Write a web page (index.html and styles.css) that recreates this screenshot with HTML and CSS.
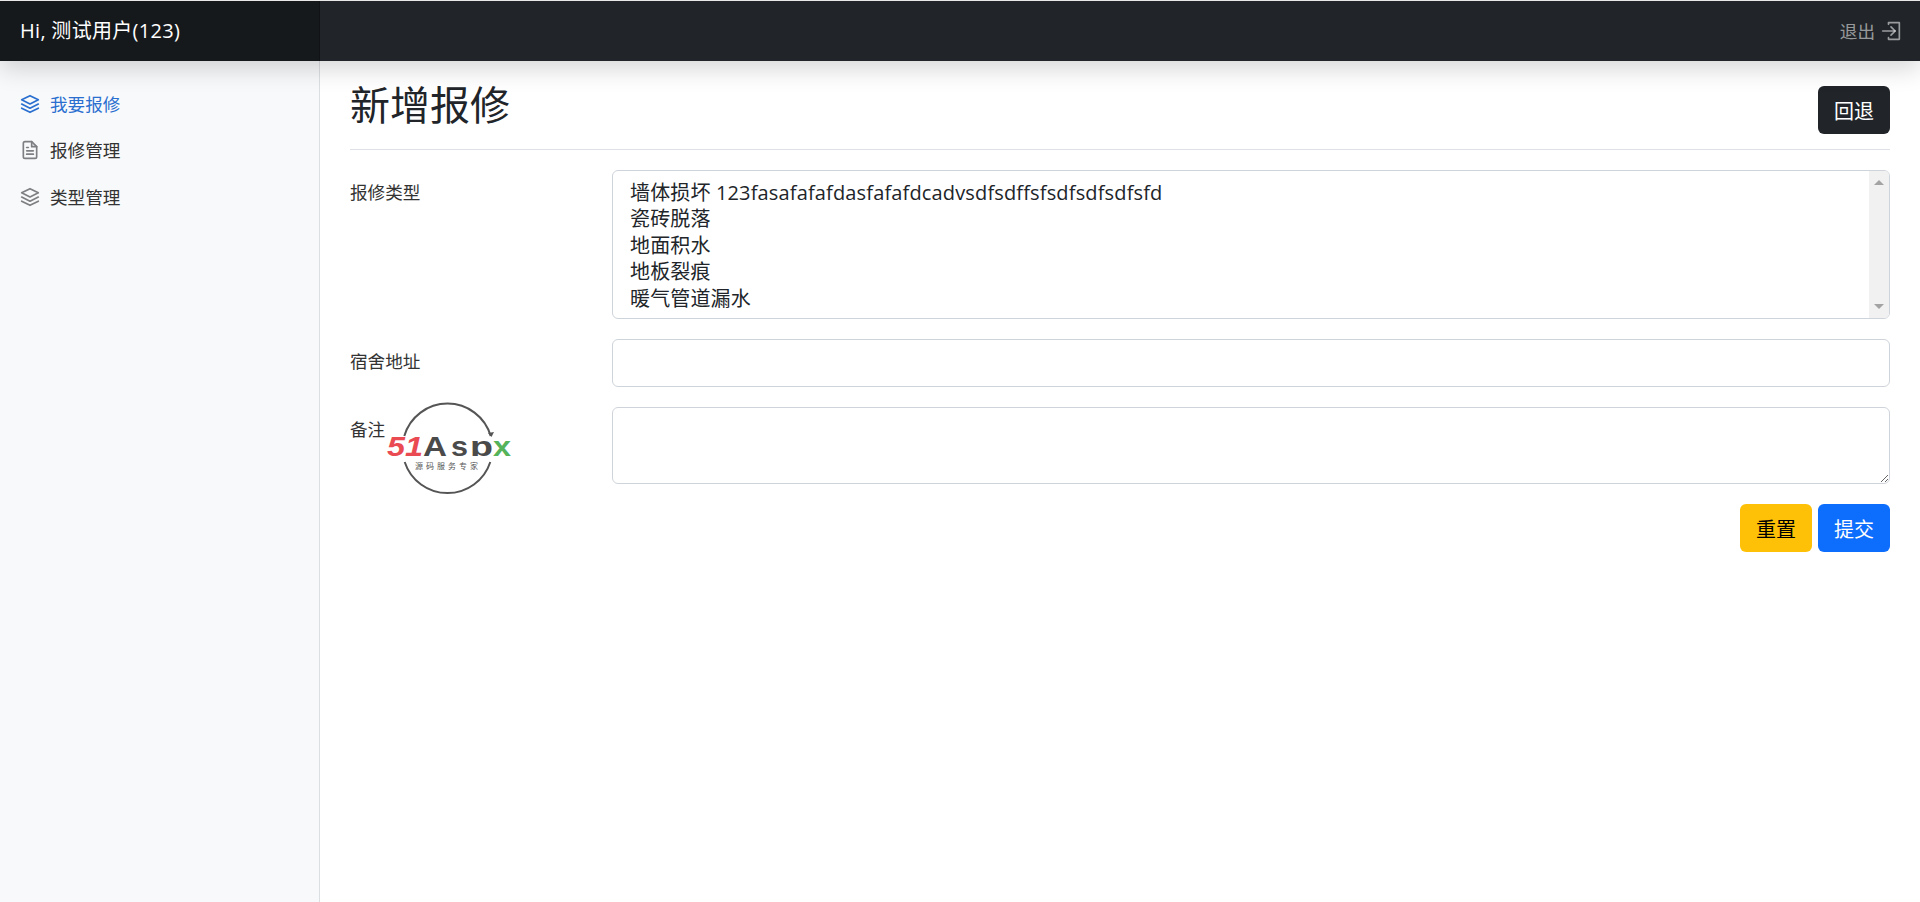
FILE: index.html
```html
<!DOCTYPE html>
<html lang="zh-CN">
<head>
<meta charset="utf-8">
<title>新增报修</title>
<link rel="stylesheet" href="styles.css">
</head>
<body>
<header class="navbar">
  <a class="brand">Hi, 测试用户(123)</a>
  <a class="logout">退出
    <svg class="icon" viewBox="0 0 24 24"><path d="M9 4V2h13v20H9v-2"/><path d="M12 17l5-5-5-5"/><path d="M17 12H2"/></svg>
  </a>
</header>
<div class="layout">
  <nav class="sidebar">
    <a class="nav-link active"><svg class="icon" viewBox="0 0 24 24"><path d="M12 2 2 7l10 5 10-5-10-5z"/><path d="M2 17l10 5 10-5"/><path d="M2 12l10 5 10-5"/></svg>我要报修</a>
    <a class="nav-link"><svg class="icon" viewBox="0 0 24 24"><path d="M14 2H6a2 2 0 0 0-2 2v16a2 2 0 0 0 2 2h12a2 2 0 0 0 2-2V8z"/><path d="M14 2v6h6"/><path d="M16 13H8"/><path d="M16 17H8"/><path d="M10 9H8"/></svg>报修管理</a>
    <a class="nav-link"><svg class="icon" viewBox="0 0 24 24"><path d="M12 2 2 7l10 5 10-5-10-5z"/><path d="M2 17l10 5 10-5"/><path d="M2 12l10 5 10-5"/></svg>类型管理</a>
  </nav>
  <main class="main">
    <div class="page-head">
      <h1>新增报修</h1>
      <button class="btn btn-dark" type="button">回退</button>
    </div>
    <form class="form">
      <label class="label">报修类型</label>
      <div class="select-wrap">
        <select class="control select" multiple size="5">
          <option>墙体损坏 123fasafafafdasfafafdcadvsdfsdffsfsdfsdfsdfsfd</option>
          <option>瓷砖脱落</option>
          <option>地面积水</option>
          <option>地板裂痕</option>
          <option>暖气管道漏水</option>
        </select>
        <div class="scrollbar"><span class="arrow-up"></span><span class="arrow-down"></span></div>
      </div>
      <label class="label">宿舍地址</label>
      <input class="control input" type="text">
      <label class="label">备注</label>
      <textarea class="control textarea"></textarea>
      <div class="actions">
        <button class="btn btn-warning" type="button">重置</button>
        <button class="btn btn-primary" type="button">提交</button>
      </div>
    </form>
  </main>
</div>
<svg class="watermark" viewBox="0 0 140 104">
  <defs><clipPath id="logo-clip"><rect x="0" y="30" width="140" height="30"/></clipPath></defs>
  <path class="ring" d="M24.3 40A45 45 0 0 1 110.7 40"/>
  <path class="ring" d="M24.7 66A45 45 0 0 0 110.3 66"/>
  <path class="ring-head" d="M108 37l3.5 4 2.5-5z"/>
  <g clip-path="url(#logo-clip)">
    <text class="logo-51" x="7" y="60" textLength="36" lengthAdjust="spacingAndGlyphs">51</text>
    <text class="logo-asp" x="43" y="60" textLength="24" lengthAdjust="spacingAndGlyphs">A</text>
    <text class="logo-asp" x="71" y="60" textLength="17" lengthAdjust="spacingAndGlyphs">s</text>
    <text class="logo-asp" x="90" y="60" textLength="23" lengthAdjust="spacingAndGlyphs">p</text>
    <text class="logo-x" x="113" y="60" textLength="18" lengthAdjust="spacingAndGlyphs">x</text>
  </g>
  <text class="logo-sub" x="35" y="73" textLength="63">源码服务专家</text>
</svg>
</body>
</html>
```
FILE: styles.css
```css
* { box-sizing: border-box; }
html, body { height: 100%; }
body {
  margin: 0;
  background: #fff;
  color: #212529;
  font-family: "Open Sans", "Noto Sans CJK SC", sans-serif;
  font-size: 17.6px;
  line-height: 1.5;
  overflow: hidden;
}
.navbar {
  position: relative;
  z-index: 2;
  display: flex;
  align-items: stretch;
  justify-content: space-between;
  height: 61px;
  background: #212529;
  border-top: 1px solid #e8e8e8;
  box-shadow: 0 8px 24px rgba(0, 0, 0, .16);
}
.brand {
  width: 320px;
  padding-left: 20px;
  background: #16191c;
  color: #fff;
  font-size: 20px;
  letter-spacing: .3px;
  line-height: 59px;
  box-shadow: inset -1px 0 0 rgba(0, 0, 0, .25);
}
.logout {
  display: flex;
  align-items: center;
  gap: 6px;
  padding-right: 19px;
  color: rgba(255, 255, 255, .55);
  font-size: 17.6px;
}
.logout .icon { width: 20px; height: 20px; }
.layout { display: flex; height: 841px; }
.sidebar {
  width: 320px;
  padding: 19.6px 0 0;
  background: #f8f9fa;
  border-right: 1px solid #dcdfe2;
}
.nav-link {
  display: flex;
  align-items: center;
  height: 46.5px;
  padding-left: 20px;
  gap: 10px;
  color: #333;
}
.nav-link .icon { width: 20px; height: 20px; color: #7d7f82; }
.nav-link.active, .nav-link.active .icon { color: #2a6fd0; }
.icon {
  fill: none;
  stroke: currentColor;
  stroke-width: 2;
  stroke-linecap: round;
  stroke-linejoin: round;
  flex: none;
}
.main { flex: 1; padding: 25px 30px 0; }
.page-head {
  display: flex;
  justify-content: space-between;
  align-items: flex-start;
  height: 64px;
  margin-bottom: 20px;
  border-bottom: 1px solid #dee2e6;
}
h1 {
  margin: -5px 0 0;
  font-size: 40px;
  font-weight: 400;
  line-height: 1.2;
}
.btn {
  width: 72px;
  height: 48px;
  padding: 0;
  border: 1px solid transparent;
  border-radius: 6px;
  font-family: inherit;
  font-size: 20px;
}
.btn-dark { background: #212529; color: #fff; }
.btn-warning { background: #ffc107; color: #000; }
.btn-primary { background: #0d6efd; color: #fff; }
.form {
  display: grid;
  grid-template-columns: 262px 1fr;
  row-gap: 20px;
}
.label { padding-top: 9px; color: #333; }
.control {
  display: block;
  width: 100%;
  border: 1px solid #ced4da;
  border-radius: 6px;
  background: #fff;
  color: #212529;
  font-family: inherit;
  font-size: 20px;
  outline: none;
}
.select-wrap { position: relative; }
.select {
  height: 149px;
  padding: 5.5px 0 0 17px;
  overflow: hidden;
  letter-spacing: .15px;
}
.select option { height: 26.5px; min-height: 26.5px; padding: 0; line-height: 26.5px; overflow: hidden; }
.scrollbar {
  position: absolute;
  top: 1px;
  right: 1px;
  bottom: 1px;
  width: 20px;
  background: #f1f1f1;
  border-radius: 0 5px 5px 0;
}
.arrow-up, .arrow-down {
  position: absolute;
  left: 5px;
  width: 0;
  height: 0;
  border-left: 5px solid transparent;
  border-right: 5px solid transparent;
}
.arrow-up { top: 9px; border-bottom: 5px solid #a3a3a3; }
.arrow-down { bottom: 9px; border-top: 5px solid #a3a3a3; }
.input { height: 48px; padding: 8px 16px; }
.textarea { height: 77px; padding: 8px 16px; }
.actions {
  grid-column: 1 / -1;
  display: flex;
  justify-content: flex-end;
  gap: 6px;
}
.watermark {
  position: absolute;
  left: 380px;
  top: 396px;
  width: 140px;
  height: 104px;
}
.ring { fill: none; stroke: #555; stroke-width: 2; }
.ring-head { fill: #555; }
.logo-51, .logo-asp, .logo-x {
  font-family: "Liberation Sans", sans-serif;
  font-size: 27px;
  font-weight: 700;
}
.logo-51 { fill: #ea4a52; font-style: italic; }
.logo-asp { fill: #4a4a4a; }
.logo-x { fill: #55b35a; }
.logo-sub { fill: #555; font-family: "Noto Sans CJK SC", sans-serif; font-size: 8px; }
```
